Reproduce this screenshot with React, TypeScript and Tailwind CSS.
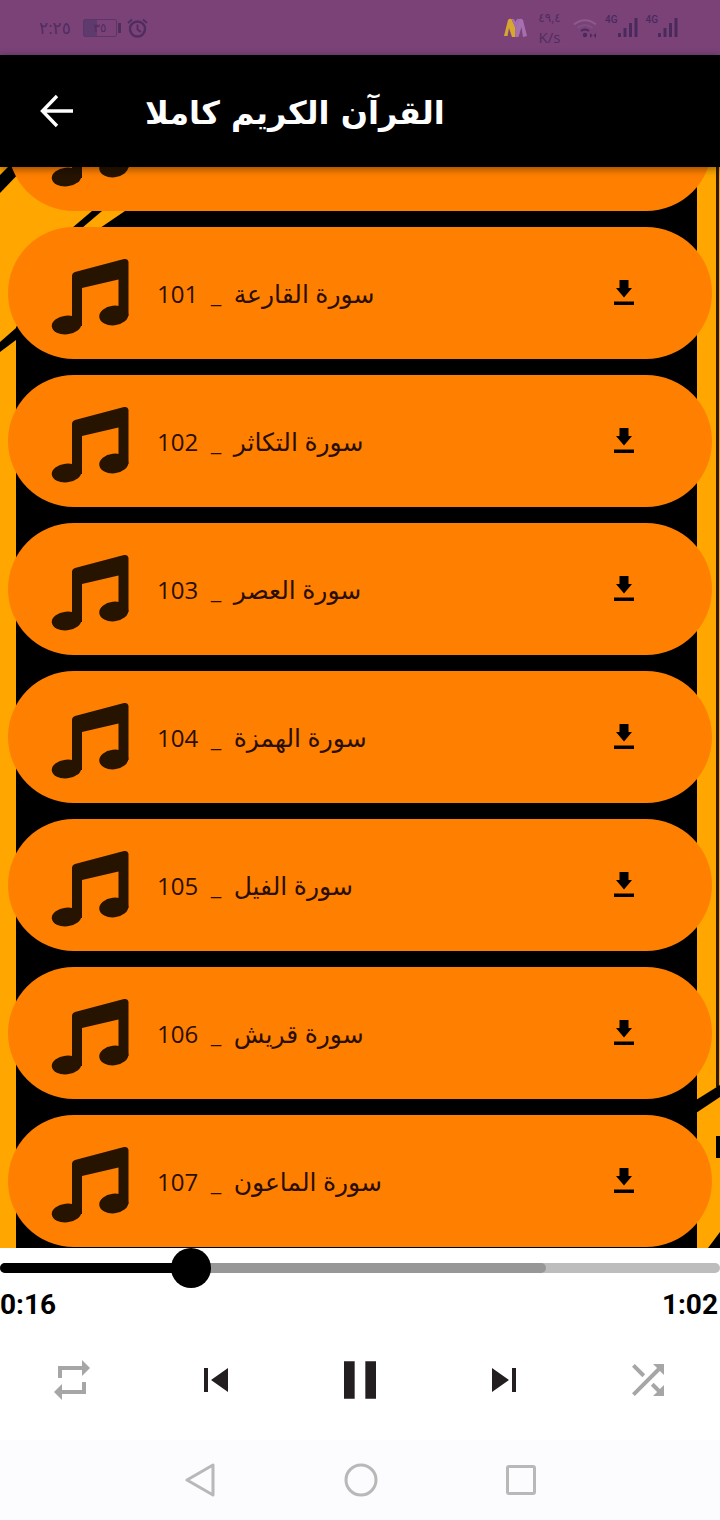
import React from "react"

const suras = [
  { id: 100, name: "سورة العاديات" },
  { id: 101, name: "سورة القارعة" },
  { id: 102, name: "سورة التكاثر" },
  { id: 103, name: "سورة العصر" },
  { id: 104, name: "سورة الهمزة" },
  { id: 105, name: "سورة الفيل" },
  { id: 106, name: "سورة قريش" },
  { id: 107, name: "سورة الماعون" },
]

const arabicStack = "font-['Open_Sans','DejaVu_Sans',sans-serif]"

function SignalBars() {
  return (
    <svg width="20" height="20" viewBox="0 0 20 20" className="fill-[#4a2a5c]">
      <rect x="0" y="15" width="3" height="4" />
      <rect x="5.5" y="10" width="3" height="9" />
      <rect x="11" y="5" width="3" height="14" />
      <rect x="16.5" y="0" width="3" height="19" />
    </svg>
  )
}

function StatusBar() {
  return (
    <div className={`flex h-[55px] items-center justify-between bg-[#7b4278] pl-[39px] pr-[42px] ${arabicStack}`}>
      <div className="flex items-center">
        <span className="w-[32px] text-[17px] leading-none text-[#4f2d5e]">٢:٢٥</span>
        <div className="ml-[12px] flex h-[18px] w-[34px] items-center justify-center rounded-[2px] border border-[#5b3768] bg-[linear-gradient(90deg,#5f3a6c_0,#5f3a6c_40%,transparent_40%)] text-[12px] leading-none text-[#4f2d5e]">
          ٣٥
        </div>
        <div className="ml-[1px] h-[10px] w-[3px] bg-[#4f2d5e]" />
        <svg width="21" height="20" viewBox="0 0 21 20" fill="none" className="ml-[6px] stroke-[#4f2d5e]">
          <circle cx="10.5" cy="11" r="7.5" strokeWidth="2.4" />
          <path d="M10.5 6.5V11.5L14 14" strokeWidth="1.8" />
          <path d="M1 5L5 1.5M20 5L16 1.5" strokeWidth="1.8" />
        </svg>
      </div>
      <div className="flex items-center">
        <svg width="23" height="20" viewBox="0 0 23 20">
          <path d="M0 18L4 2Q5.5 0 7.5 1L11.5 10L11.5 19L8 19L5 10L3.5 18Z" fill="#d8a72f" />
          <path d="M11.5 10L15 1Q17.5 0 19 2L23 18L19 19L17.5 9L14.5 19L11.5 19Z" fill="#a66fb0" />
          <path d="M7.5 1L11.5 10L15 1Q13 0 11.5 4Q10 0 7.5 1Z" fill="#a66fb0" />
        </svg>
        <div className="ml-[11px] flex w-[23px] flex-col items-center text-[#4f2d5e]">
          <span className="text-[12px] leading-[12px]">٤٩,٤</span>
          <span className="mt-[6px] text-[15px] leading-[14px]">K/s</span>
        </div>
        <svg width="24" height="20" viewBox="0 0 24 20" fill="none" className="ml-[12px]">
          <path d="M1 6.5Q12 -2 23 6.5" stroke="#8c5a8c" strokeWidth="2" />
          <path d="M4.5 10Q12 4 19.5 10" stroke="#7f4f82" strokeWidth="2" />
          <path d="M8 13Q12 10 16 13" stroke="#4a2a5c" strokeWidth="2" />
          <circle cx="12" cy="17" r="2.2" fill="#4a2a5c" />
          <path d="M17 15l2.5 2.5L17 20zM23 15l-2.5 2.5L23 20z" fill="#4a2a5c" />
        </svg>
        <div className="ml-[8px] flex items-start">
          <span className="mt-[-3px] font-['Roboto',sans-serif] text-[10px] font-medium leading-none text-[#4a2a5c]">4G</span>
          <SignalBars />
        </div>
        <div className="ml-[8px] flex items-start">
          <span className="mt-[-3px] font-['Roboto',sans-serif] text-[10px] font-medium leading-none text-[#4a2a5c]">4G</span>
          <SignalBars />
        </div>
      </div>
    </div>
  )
}

function AppBar() {
  return (
    <header className="relative z-10 flex h-[112px] items-center bg-black pl-[40px] shadow-[0_2px_8px_rgba(0,0,0,0.45)]">
      <svg width="34" height="34" viewBox="0 0 34 34" fill="none" stroke="white" strokeWidth="3.4">
        <path d="M33 17H3M17 2L2.5 17L17 32" />
      </svg>
      <h1 className="ml-[71px] mt-[3px] font-['DejaVu_Sans',sans-serif] text-[32px] font-bold leading-normal text-white">
        القرآن الكريم كاملا
      </h1>
    </header>
  )
}

function MusicIcon() {
  return (
    <svg width="76" height="76" viewBox="0 0 76 76" className="mt-[7px] shrink-0 overflow-visible fill-[#261300]">
      <path d="M20 17Q20 14 23 13L72 0Q76 -0.5 76.5 3V57L66.5 57V20.5L30 29V67L20 67Z" />
      <ellipse cx="14.5" cy="66" rx="14.8" ry="9.4" transform="rotate(-6 14.5 66)" />
      <ellipse cx="61.8" cy="56.5" rx="14.6" ry="9.8" transform="rotate(-6 61.8 56.5)" />
    </svg>
  )
}

function DownloadIcon() {
  return (
    <svg width="20" height="25" viewBox="0 0 20 25" className="mb-[2px] fill-black">
      <path d="M5.5 0H14.5V8H18L10 17.5L2 8H5.5Z" />
      <rect x="0" y="21.5" width="20" height="3.5" />
    </svg>
  )
}

function SuraRow({ id, name }: { id: number; name: string }) {
  return (
    <div className="flex h-[132px] shrink-0 items-center justify-between rounded-full bg-[#ff8000] pl-[44px] pr-[78px]">
      <div className="flex items-center">
        <MusicIcon />
        <span className={`ml-[29px] whitespace-pre text-[24px] leading-none text-[#2a0f00] ${arabicStack}`}>
          {id}  _  <span className="text-[25px]">{name}</span>
        </span>
      </div>
      <DownloadIcon />
    </div>
  )
}

function Backdrop() {
  return (
    <svg className="absolute inset-0 h-full w-full" viewBox="0 167 720 1081" preserveAspectRatio="none">
      <rect x="0" y="167" width="720" height="1081" fill="#000" />
      <polygon points="0,167 150,167 125,211 100,228 16,327 16,1248 0,1248" fill="#ffa600" />
      <polygon points="0,175 8,167 25,167 0,193" fill="#000" />
      <polygon points="72,228 92,211 102,211 82,228" fill="#000" />
      <polygon points="0,342 16,328 30,320 30,330 16,340 0,352" fill="#000" />
      <rect x="697" y="167" width="23" height="1081" fill="#ffa600" />
      <rect x="716" y="167" width="3" height="920" fill="#2a1a00" />
      <polygon points="696,1100 720,1085 720,1097 696,1113" fill="#000" />
      <rect x="716" y="1136" width="4" height="22" fill="#000" />
      <polygon points="720,1232 720,1248 708,1248" fill="#000" />
    </svg>
  )
}

function SurahList() {
  return (
    <div className="relative h-[1081px] overflow-hidden">
      <Backdrop />
      <div className="relative mx-[8px] mt-[-88px] flex flex-col gap-[16px]">
        {suras.map((s) => (
          <SuraRow key={s.id} id={s.id} name={s.name} />
        ))}
      </div>
    </div>
  )
}

function Seekbar() {
  return (
    <div className="relative h-[40px]">
      <div className="absolute left-0 right-0 top-[15px] h-[10px] rounded-full bg-[#bdbdbd]" />
      <div className="absolute left-0 top-[15px] h-[10px] w-[546px] rounded-full bg-[#979797]" />
      <div className="absolute left-0 top-[15px] h-[10px] w-[190px] rounded-full bg-black" />
      <div className="absolute left-[171px] top-0 h-[40px] w-[40px] rounded-full bg-black" />
    </div>
  )
}

function Controls() {
  return (
    <div className="mt-[27px] grid grid-cols-5 items-center justify-items-center">
      <svg width="48" height="48" viewBox="0 0 24 24" fill="#a6a6a6">
        <path d="M7 7h10v3l4-4-4-4v3H5v6h2V7zm10 10H7v-3l-4 4 4 4v-3h12v-6h-2v4z" />
      </svg>
      <svg width="48" height="48" viewBox="0 0 24 24" fill="#231f20">
        <path d="M6 6h2v12H6zm3.5 6l8.5 6V6z" />
      </svg>
      <svg width="64" height="64" viewBox="0 0 24 24" fill="#231f20">
        <path d="M6 19h4V5H6v14zm8-14v14h4V5h-4z" />
      </svg>
      <svg width="48" height="48" viewBox="0 0 24 24" fill="#231f20">
        <path d="M6 18l8.5-6L6 6v12zM16 6v12h2V6h-2z" />
      </svg>
      <svg width="48" height="48" viewBox="0 0 24 24" fill="#a6a6a6">
        <path d="M10.59 9.17L5.41 4 4 5.41l5.17 5.17 1.42-1.41zM14.5 4l2.04 2.04L4 18.59 5.41 20 17.96 7.46 20 9.5V4h-5.5zm.33 9.41l-1.41 1.41 3.13 3.13L14.5 20H20v-5.5l-2.04 2.04-3.13-3.13z" />
      </svg>
    </div>
  )
}

function Player() {
  return (
    <div className="flex h-[192px] flex-col bg-white">
      <Seekbar />
      <div className="flex justify-between pr-[2px] pt-[1px] font-['Roboto',sans-serif] text-[28px] font-bold leading-[32px] text-black">
        <span>0:16</span>
        <span>1:02</span>
      </div>
      <Controls />
    </div>
  )
}

function NavBar() {
  return (
    <nav className="flex h-[80px] items-center justify-center gap-[128px] bg-[#fcfbfd]">
      <svg width="32" height="34" viewBox="0 0 32 34" fill="none" stroke="#b8b8b8" strokeWidth="3" strokeLinejoin="round">
        <path d="M29 2V32L3 17Z" />
      </svg>
      <svg width="34" height="34" viewBox="0 0 34 34" fill="none" stroke="#b8b8b8" strokeWidth="3">
        <circle cx="17" cy="17" r="15" />
      </svg>
      <svg width="30" height="30" viewBox="0 0 30 30" fill="none" stroke="#b8b8b8" strokeWidth="3" strokeLinejoin="round">
        <rect x="1.5" y="1.5" width="27" height="27" rx="1.5" />
      </svg>
    </nav>
  )
}

export default function App() {
  return (
    <div className="flex h-[1520px] w-[720px] flex-col overflow-hidden bg-white">
      <StatusBar />
      <AppBar />
      <SurahList />
      <Player />
      <NavBar />
    </div>
  )
}
